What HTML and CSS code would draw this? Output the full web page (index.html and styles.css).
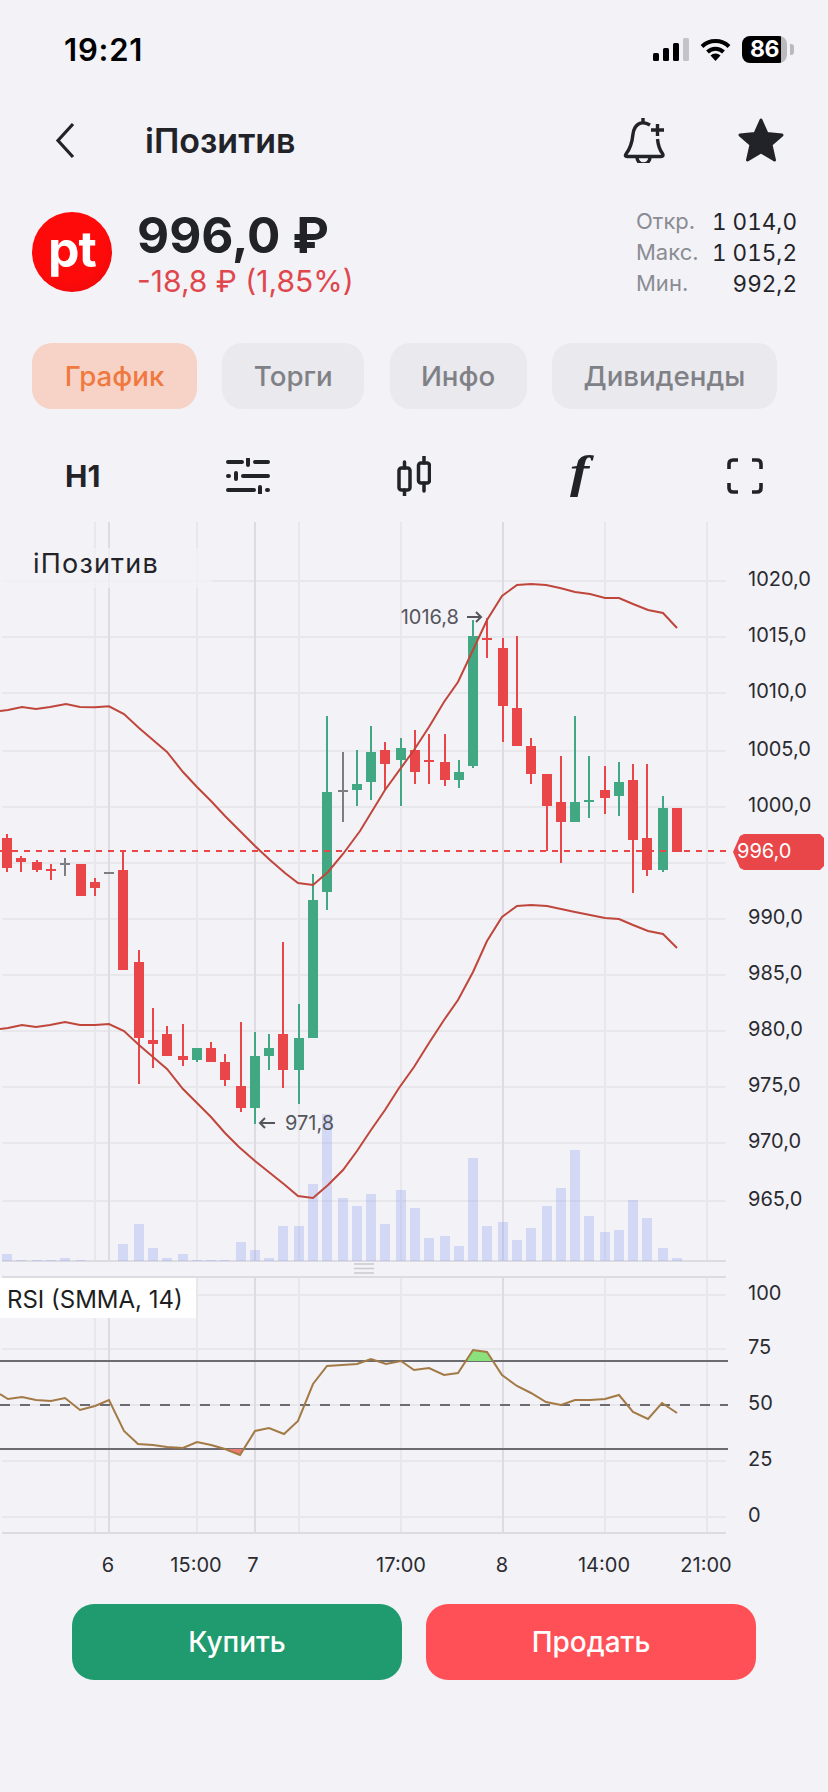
FILE: index.html
```html
<!DOCTYPE html>
<html>
  <head>
    <title>iПозитив</title>
    <link rel="stylesheet" href="styles.css">
  </head>
  <body>
    <div class="status">
      <span class="time">19:21</span>
      <div class="status-icons">
        <svg class="signal" viewBox="0 0 36 23">
          <rect x="0" y="15" width="6" height="8" rx="1.5" fill="#000"/>
          <rect x="10" y="10" width="6" height="13" rx="1.5" fill="#000"/>
          <rect x="20" y="5" width="6" height="18" rx="1.5" fill="#000"/>
          <rect x="30" y="0" width="6" height="23" rx="1.5" fill="#c4c4c8"/>
        </svg>
        <svg class="wifi" viewBox="0 0 31 24">
          <path d="M2 9.5A19.5 19.5 0 0 1 29 9.5M7.5 15A11.5 11.5 0 0 1 23.5 15" fill="none" stroke="#000" stroke-width="4"/>
          <path d="M15.5 24L10.5 18.5A7 7 0 0 1 20.500 18.500Z" fill="#000"/>
        </svg>
        <div class="battery">86</div>
      </div>
    </div>

    <div class="nav">
      <svg class="back" viewBox="0 0 20 37">
        <polyline points="18,2 3,18.500 18,35" fill="none" stroke="#222328" stroke-width="3.200"/>
      </svg>
      <span class="nav-title">iПозитив</span>
      <svg class="bell" viewBox="0 0 43 45">
        <path d="M20 0V4M27 7C17 1 11 8 10 16C9 26 7 31 3 36Q1.500 38.500 4 38.500H38Q41 38.500 39.500 35.500C36 31 35 26 34.500 21M14 39.500a6.500 6.500 0 0 0 13 0M34.500 6V18M28 12H41" fill="none" stroke="#222328" stroke-width="3.400"/>
      </svg>
      <svg class="star" viewBox="0 0 46 44">
        <polygon points="23,2 29,15.500 44,17 33,26.500 36.500,42 23,34 9.500,42 13,26.500 2,17 17,15.500" fill="#222328" stroke="#222328" stroke-width="3" stroke-linejoin="round"/>
      </svg>
    </div>

    <div class="quote">
      <div class="logo">pt</div>
      <div class="price-col">
        <div class="price">996,0 ₽</div>
        <div class="change">-18,8 ₽ (1,85%)</div>
      </div>
      <div class="stats">
        <span class="stat-label">Откр.</span><span class="stat-value">1 014,0</span>
        <span class="stat-label">Макс.</span><span class="stat-value">1 015,2</span>
        <span class="stat-label">Мин.</span><span class="stat-value">992,2</span>
      </div>
    </div>

    <div class="tabs">
      <div class="tab tab-active tab-chart">График</div>
      <div class="tab tab-trades">Торги</div>
      <div class="tab tab-info">Инфо</div>
      <div class="tab tab-divs">Дивиденды</div>
    </div>

    <div class="toolbar">
      <span class="interval">H1</span>
      <svg class="tool-sliders" viewBox="0 0 44 36">
        <path d="M2 4H16M22 1V7M29 4H42M2 18H3M10 15V21M17 18H42M2 32H28M34 29V35M41 32H42" fill="none" stroke="#222328" stroke-width="4" stroke-linecap="round"/>
      </svg>
      <svg class="tool-candles" viewBox="0 0 34 40">
        <path d="M7.500 6V12M7.500 34V40M27 0V7M27 27V35" fill="none" stroke="#222328" stroke-width="3.500" stroke-linecap="round"/>
        <rect x="2" y="12" width="11" height="22" rx="2.500" fill="none" stroke="#222328" stroke-width="3.500"/>
        <rect x="21.500" y="7" width="11" height="20" rx="2.500" fill="none" stroke="#222328" stroke-width="3.500"/>
      </svg>
      <span class="tool-f">f</span>
      <svg class="tool-full" viewBox="0 0 36 36">
        <path d="M2 11V6Q2 2 6 2H11M25 2H30Q34 2 34 6V11M34 25V30Q34 34 30 34H25M11 34H6Q2 34 2 30V25" fill="none" stroke="#222328" stroke-width="3.600"/>
      </svg>
    </div>

    <svg class="chart" viewBox="0 520 828 1060">
      <!-- grid -->
      <path class="grid" d="M2 581H726M2 637H726M2 693H726M2 751H726M2 807H726M2 863H726M2 919H726M2 975H726M2 1031H726M2 1087H726M2 1143H726M2 1201H726M2 1295H726M2 1349H726M2 1405H726M2 1461H726M2 1517H726"/>
      <path class="grid" d="M95 522V1261M197 522V1261M299 522V1261M401 522V1261M605 522V1261M707 522V1261M95 1277V1533M197 1277V1533M299 1277V1533M401 1277V1533M605 1277V1533M707 1277V1533"/>
      <path class="grid-dark" d="M109 522V1261M255 522V1261M503 522V1261M109 1277V1533M255 1277V1533M503 1277V1533M2 1261H726M2 1277H726M2 1533H726"/>
      <rect class="title-mask" x="0" y="548" width="212" height="40"/>
      <text class="chart-title" x="33" y="573">iПозитив</text>

      <!-- volume -->
      <path class="volume" d="M7 1261V1254M21 1261V1260M37 1261V1260M51 1261V1260M65 1261V1258M81 1261V1260M123 1261V1244M139 1261V1224M153 1261V1248M167 1261V1258M183 1261V1254M197 1261V1260M211 1261V1260M225 1261V1260M241 1261V1242M255 1261V1250M269 1261V1258M283 1261V1226M299 1261V1226M313 1261V1184M327 1261V1114M343 1261V1198M357 1261V1206M371 1261V1194M385 1261V1224M401 1261V1190M415 1261V1208M429 1261V1238M445 1261V1236M459 1261V1246M473 1261V1158M487 1261V1226M503 1261V1222M517 1261V1240M531 1261V1228M547 1261V1206M561 1261V1188M575 1261V1150M589 1261V1216M605 1261V1232M619 1261V1230M633 1261V1200M647 1261V1218M663 1261V1248M677 1261V1258"/>

      <!-- candles: wicks, then bodies -->
      <path class="wick wick-red" d="M7 834V872M21 856V872M37 860V872M51 864V880M95 878V896M123 850V870M139 950V1084M153 1008V1068M167 1026V1056M183 1024V1066M211 1042V1062M225 1054V1086M241 1022V1112M283 942V1088M385 742V790M415 730V784M429 734V784M445 734V786M487 618V658M503 638V742M517 636V746M531 738V784M547 806V851M561 756V863M605 766V814M633 764V893M647 764V876"/>
      <path class="wick wick-green" d="M197 1056V1062M255 1032V1124M269 1034V1070M299 1004V1104M313 874V900M327 716V910M357 750V806M371 726V800M401 738V806M459 760V788M473 620V768M575 716V822M589 756V818M619 762V816M663 796V872"/>
      <path class="wick wick-gray" d="M65 858V876M343 752V822"/>
      <path class="body body-red" d="M7 838V868M21 858V862M37 862V870M51 869V871M81 864V896M95 882V888M123 870V970M139 962V1038M153 1040V1044M167 1034V1056M183 1056V1060M211 1048V1062M225 1062V1080M241 1086V1108M283 1034V1070M385 750V764M415 750V772M429 760V762M445 762V780M487 638V640M503 648V706M517 708V746M531 746V774M547 774V806M561 802V822M605 790V798M633 780V840M647 838V870M677 808V852"/>
      <path class="body body-green" d="M197 1048V1060M255 1056V1108M269 1048V1056M299 1038V1070M313 900V1038M327 792V892M357 784V790M371 752V782M401 748V760M459 772V780M473 636V766M575 802V822M589 800V802M619 782V796M663 808V870"/>
      <path class="body body-gray" d="M65 863V865M109 872V874M343 790V792"/>

      <!-- last price -->
      <path class="last-line" d="M0 851H730"/>

      <!-- bollinger -->
      <polyline class="band" points="0,711 8,710 22,707 36,709 50,707 66,704 80,707 95,707.300 109,706.300 124,714 139,728 153,740 167,752 183,772 197,787 211,801 225,816 239,830 255,846 270,860 285,873 298,883 313,885 328,872 343,854 360,831 385,790 414,750 429,727 444,702 458,682 473,650 487,620 502,596 517,585 531,584 546,585 560,588 575,592 590,594 605,598 619,598 633,604 648,610 663,613 677,628"/>
      <polyline class="band" points="0,1029 8,1028 22,1025 36,1027 50,1025 65,1022 80,1025 95,1025 109,1024 124,1031 139,1045 153,1057 167,1069 183,1089 197,1103 211,1117 225,1133 239,1147 255,1161 270,1173 285,1185 298,1196 313,1198 328,1185 343,1170 357,1151 371,1130 385,1110 399,1088 414,1067 429,1043 444,1020 458,1000 473,972 487,941 502,917 517,906 531,905 547,906 561,909 575,912 590,915 605,918 619,919 633,925 648,931 663,934 677,948"/>

      <!-- high / low marks -->
      <text class="mark" x="459" y="624" text-anchor="end">1016,8</text>
      <path class="mark-arrow" d="M467 617H481M476 612L481 617L476 622"/>
      <path class="mark-arrow" d="M275 1123H260M265 1118L260 1123L265 1128"/>
      <text class="mark" x="285" y="1130">971,8</text>

      <!-- price axis -->
      <g class="axis">
        <text x="748" y="586">1020,0</text>
        <text x="748" y="642">1015,0</text>
        <text x="748" y="698">1010,0</text>
        <text x="748" y="756">1005,0</text>
        <text x="748" y="812">1000,0</text>
        <text x="748" y="924">990,0</text>
        <text x="748" y="980">985,0</text>
        <text x="748" y="1036">980,0</text>
        <text x="748" y="1092">975,0</text>
        <text x="748" y="1148">970,0</text>
        <text x="748" y="1206">965,0</text>
      </g>
      <polygon class="price-tag" points="733,852 740,836 744,834 820,834 824,838 824,866 820,870 744,870 740,868"/>
      <text class="price-tag-text" x="737" y="858">996,0</text>

      <!-- pane handle -->
      <path class="handle" d="M354 1264H374M354 1268.500H374M354 1273H374"/>

      <!-- rsi -->
      <rect class="rsi-box" x="0" y="1278" width="196" height="40"/>
      <text class="rsi-title" x="7" y="1308">RSI (SMMA, 14)</text>
      <path class="rsi-level" d="M0 1361H728M0 1449H728"/>
      <path class="rsi-mid" d="M0 1405H728"/>
      <polygon fill="#8be27d" points="467,1361 473,1350 487,1352 492,1361"/>
      <polygon fill="#ef7a6f" points="227,1449 240,1455 243,1449"/>
      <polyline class="rsi-line" points="0,1394 8,1399 22,1397 36,1400 51,1401 65,1398 80,1410 95,1406 109,1400 124,1431 138,1444 153,1445 167,1447 183,1448 197,1442 211,1445 225,1449 240,1455 255,1431 269,1428 284,1434 298,1421 313,1384 327,1366 342,1365 357,1364 371,1359 386,1364 401,1361 414,1370 429,1368 444,1375 458,1373 473,1350 487,1352 502,1375 517,1386 531,1393 546,1402 561,1405 575,1400 590,1400 605,1399 619,1395 633,1412 648,1419 662,1403 677,1413"/>
      <g class="axis">
        <text x="748" y="1300">100</text>
        <text x="748" y="1354">75</text>
        <text x="748" y="1410">50</text>
        <text x="748" y="1466">25</text>
        <text x="748" y="1522">0</text>
      </g>

      <!-- time axis -->
      <g class="axis axis-x">
        <text x="108" y="1572">6</text>
        <text x="196" y="1572">15:00</text>
        <text x="253" y="1572">7</text>
        <text x="401" y="1572">17:00</text>
        <text x="502" y="1572">8</text>
        <text x="604" y="1572">14:00</text>
        <text x="706" y="1572">21:00</text>
      </g>
    </svg>

    <div class="actions">
      <div class="action action-buy">Купить</div>
      <div class="action action-sell">Продать</div>
    </div>
  </body>
</html>
```

FILE: styles.css
```css
* {
  box-sizing: border-box;
}
html,
body {
  margin: 0;
  height: 1792px;
  overflow: hidden;
}
body {
  background: #f2f2f7;
  color: #222328;
  font-family: Inter, "Noto Sans", sans-serif;
}

/* status bar */
.status {
  display: flex;
  align-items: center;
  justify-content: space-between;
  height: 98px;
  padding: 0 41px 0 64px;
}
.time {
  color: #000;
  font-size: 31px;
  font-weight: 600;
  letter-spacing: 0.8px;
}
.status-icons {
  display: flex;
  align-items: center;
  gap: 11px;
}
.signal {
  width: 36px;
  height: 23px;
}
.wifi {
  width: 31px;
  height: 24px;
}
.battery {
  position: relative;
  width: 45px;
  height: 27px;
  border-radius: 8px;
  background: linear-gradient(90deg, #000 86%, #b9b9be 86%);
  color: #fff;
  font-size: 23px;
  font-weight: 700;
  line-height: 27px;
  text-align: center;
  letter-spacing: -0.5px;
}
.battery::after {
  content: "";
  position: absolute;
  right: -7px;
  top: 8px;
  width: 4px;
  height: 11px;
  border-radius: 0 3px 3px 0;
  background: #b9b9be;
}

/* nav */
.nav {
  display: flex;
  align-items: center;
  height: 84px;
  padding-left: 55px;
}
.back {
  width: 20px;
  height: 37px;
}
.nav-title {
  margin-left: 70px;
  font-size: 34px;
  font-weight: 600;
}
.bell {
  width: 43px;
  height: 45px;
  margin-left: auto;
}
.star {
  width: 46px;
  height: 44px;
  margin-left: 72px;
  margin-right: 44px;
}

/* quote */
.quote {
  display: flex;
  align-items: flex-start;
  height: 80px;
  margin-top: 30px;
  padding: 0 31px 0 32px;
}
.logo {
  display: flex;
  align-items: center;
  justify-content: center;
  width: 80px;
  height: 80px;
  padding-bottom: 6px;
  border-radius: 50%;
  background: radial-gradient(circle at 45% 40%, #ff0a0a 55%, #e40a0a 100%);
  color: #fff;
  font-size: 50px;
  font-weight: 700;
  letter-spacing: -1px;
}
.price-col {
  margin-left: 25px;
}
.price {
  margin-top: -6px;
  font-size: 49.500px;
  font-weight: 700;
  line-height: 58px;
}
.change {
  color: #e0474c;
  font-size: 30px;
  line-height: 34px;
}
.stats {
  display: grid;
  grid-template-columns: auto 1fr;
  width: 161px;
  margin-left: auto;
  margin-top: -6px;
  font-size: 22px;
  line-height: 31px;
}
.stat-label {
  color: #8b8c93;
}
.stat-value {
  text-align: right;
  font-size: 22.500px;
  font-variant-numeric: tabular-nums;
}

/* tabs */
.tabs {
  display: flex;
  gap: 25.300px;
  margin-top: 51px;
  padding-left: 32px;
}
.tab {
  display: flex;
  align-items: center;
  justify-content: center;
  height: 66px;
  border-radius: 20px;
  background: #e9e9ee;
  color: #808187;
  font-size: 27.700px;
  font-weight: 500;
}
.tab-chart {
  width: 165px;
}
.tab-trades {
  width: 142px;
}
.tab-info {
  width: 137px;
}
.tab-divs {
  width: 225px;
}
.tab-active {
  background: #f7d3c7;
  color: #f0793f;
}

/* toolbar */
.toolbar {
  display: grid;
  grid-template-columns: repeat(5, 165.500px);
  align-items: center;
  justify-items: center;
  height: 70px;
  margin-top: 32px;
}
.interval {
  font-size: 30px;
  font-weight: 700;
}
.tool-sliders {
  width: 44px;
  height: 36px;
}
.tool-candles {
  width: 34px;
  height: 40px;
}
.tool-f {
  margin-top: -8px;
  font-family: "Liberation Serif", serif;
  font-size: 46px;
  font-style: italic;
  font-weight: 700;
  line-height: 50px;
  transform: scaleX(1.25);
}
.tool-full {
  width: 36px;
  height: 36px;
}

/* chart */
.chart {
  display: block;
  width: 828px;
  height: 1060px;
  margin-top: 9px;
}
.chart text {
  font-family: Inter, "Noto Sans", sans-serif;
}
.grid {
  fill: none;
  stroke: #e7e7ec;
  stroke-width: 2;
}
.grid-dark {
  fill: none;
  stroke: #dcdce2;
  stroke-width: 2;
}
.title-mask {
  fill: #f2f2f7;
  opacity: 0.75;
}
.chart-title {
  fill: #222328;
  font-size: 27px;
  letter-spacing: 1.200px;
}
.volume {
  fill: none;
  stroke: #8a9af0;
  stroke-opacity: 0.3;
  stroke-width: 10;
}
.wick {
  fill: none;
  stroke-width: 2;
}
.wick-red {
  stroke: #e84649;
}
.wick-green {
  stroke: #41a883;
}
.wick-gray {
  stroke: #7d7d84;
}
.body {
  fill: none;
  stroke-width: 10;
}
.body-red {
  stroke: #e84649;
}
.body-green {
  stroke: #41a883;
}
.body-gray {
  stroke: #7d7d84;
}
.last-line {
  fill: none;
  stroke: #e84649;
  stroke-width: 2;
  stroke-dasharray: 6 6;
}
.band {
  fill: none;
  stroke: #c0463c;
  stroke-width: 2;
}
.mark {
  fill: #55565c;
  font-size: 20px;
}
.mark-arrow {
  fill: none;
  stroke: #55565c;
  stroke-width: 2;
}
.axis text {
  fill: #2a2b30;
  font-size: 20px;
}
.axis-x text {
  text-anchor: middle;
}
.price-tag {
  fill: #e84649;
}
.chart .price-tag-text {
  fill: #fff;
  font-size: 20px;
}
.handle {
  fill: none;
  stroke: #c9cacf;
  stroke-width: 1.500;
}
.rsi-box {
  fill: #fff;
}
.rsi-title {
  fill: #1d1e22;
  font-size: 24px;
}
.rsi-level {
  fill: none;
  stroke: #6b6b70;
  stroke-width: 2;
}
.rsi-mid {
  fill: none;
  stroke: #6b6b70;
  stroke-width: 2;
  stroke-dasharray: 10 10;
}
.rsi-line {
  fill: none;
  stroke: #a37a45;
  stroke-width: 2;
}

/* buy / sell */
.actions {
  display: flex;
  gap: 24px;
  margin-top: 24px;
  padding-left: 72px;
}
.action {
  display: flex;
  align-items: center;
  justify-content: center;
  width: 330px;
  height: 76px;
  border-radius: 22px;
  color: #fff;
  font-size: 28px;
  font-weight: 500;
}
.action-buy {
  background: #1f9b6f;
}
.action-sell {
  background: #ff5057;
}
```
